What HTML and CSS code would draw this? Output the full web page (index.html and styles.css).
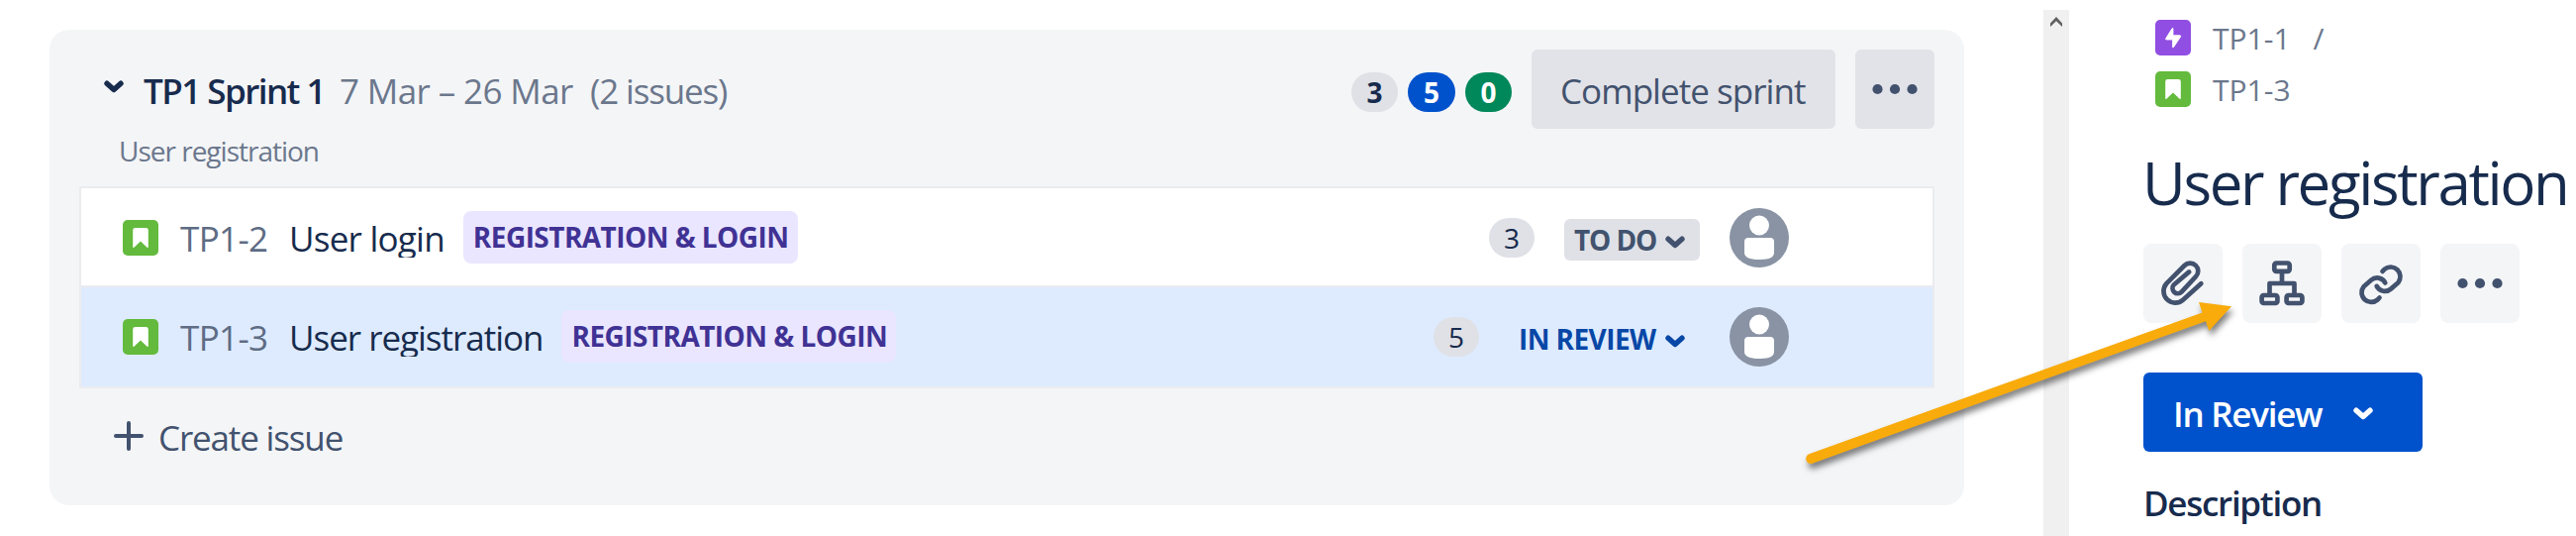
FILE: index.html
```html
<!DOCTYPE html>
<html lang="en">
<head>
<meta charset="utf-8">
<title>Backlog</title>
<link rel="stylesheet" href="styles.css">
</head>
<body>
<svg class="defs" aria-hidden="true">
  <symbol id="chevron" viewBox="0 0 20 13"><path d="M3 3.2 10 9.6 17 3.2" fill="none" stroke="currentColor" stroke-width="5.4" stroke-linecap="round" stroke-linejoin="round"/></symbol>
  <symbol id="story" viewBox="0 0 36 36"><rect width="36" height="36" rx="5" fill="#63ba3c"/><path d="M12.5 8h11a2.3 2.3 0 0 1 2.3 2.3V27q0 1.8-1.5.5L18 21.6l-6.300 5.900q-1.500 1.300-1.500-.5V10.300A2.300 2.300 0 0 1 12.500 8z" fill="#fff"/></symbol>
  <symbol id="dots" viewBox="0 0 80 80"><g fill="#42526e"><circle cx="22.500" cy="40" r="5.100"/><circle cx="40" cy="40" r="5.100"/><circle cx="57.500" cy="40" r="5.100"/></g></symbol>
  <symbol id="person" viewBox="0 0 60 60"><circle cx="30" cy="30" r="30" fill="#8993a4"/><circle cx="30" cy="17.500" r="10" fill="#fff"/><path d="M19 30h22a4 4 0 0 1 4 4v11q0 7-15 7t-15-7V34a4 4 0 0 1 4-4z" fill="#fff"/></symbol>
</svg>

<main class="backlog">
  <section class="sprint">
    <header class="sprint-head">
      <svg class="chevron sprint-toggle"><use href="#chevron"/></svg>
      <h2 class="sprint-name">TP1 Sprint 1</h2>
      <span class="sprint-dates">7 Mar – 26 Mar</span>
      <span class="sprint-count">(2 issues)</span>
      <div class="sprint-actions">
        <div class="totals">
          <span class="pill pill-bold">3</span>
          <span class="pill pill-bold pill-blue">5</span>
          <span class="pill pill-bold pill-green">0</span>
        </div>
        <button class="btn-complete">Complete sprint</button>
        <button class="btn-more"><svg class="square"><use href="#dots"/></svg></button>
      </div>
    </header>
    <p class="sprint-goal">User registration</p>

    <ul class="issues">
      <li class="issue">
        <svg class="type"><use href="#story"/></svg>
        <span class="key">TP1-2</span>
        <span class="summary">User login</span>
        <span class="epic">REGISTRATION &amp; LOGIN</span>
        <div class="meta">
          <span class="pill">3</span>
          <span class="status status-todo"><span>TO DO</span><svg class="chevron"><use href="#chevron"/></svg></span>
          <svg class="avatar"><use href="#person"/></svg>
        </div>
      </li>
      <li class="issue selected">
        <svg class="type"><use href="#story"/></svg>
        <span class="key">TP1-3</span>
        <span class="summary summary-long">User registration</span>
        <span class="epic">REGISTRATION &amp; LOGIN</span>
        <div class="meta">
          <span class="pill">5</span>
          <span class="status status-review"><span>IN REVIEW</span><svg class="chevron"><use href="#chevron"/></svg></span>
          <svg class="avatar"><use href="#person"/></svg>
        </div>
      </li>
    </ul>

    <div class="create">
      <svg class="plus" viewBox="0 0 30 30"><path d="M15 2v26M2 15h26" stroke="#42526e" stroke-width="4" stroke-linecap="round"/></svg>
      <span>Create issue</span>
    </div>
  </section>
</main>

<div class="scrollbar"><svg class="scroll-up" viewBox="0 0 14 10"><path d="M1 6.500 7 0l6 6.500V10L7 4.200 1 10z" fill="#606060"/></svg></div>

<aside class="detail">
  <nav class="crumbs">
    <div class="crumb">
      <svg class="type" viewBox="0 0 36 36"><rect width="36" height="36" rx="5" fill="#904ee2"/><path d="M17 8.700 10.700 18.800q-.7 1.200.7 1.200h6.100v7q0 1.700 1.200.4l6.900-10.300q.6-1.400-.8-1.400H18V9q-.2-1.300-1-.3z" fill="#fff" stroke="#fff" stroke-width=".8"/></svg>
      <span>TP1-1</span><span class="slash">/</span>
    </div>
    <div class="crumb">
      <svg class="type"><use href="#story"/></svg>
      <span>TP1-3</span>
    </div>
  </nav>
  <h1 class="title">User registration</h1>
  <div class="tools">
    <button class="tool"><svg class="square line" viewBox="0 0 80 80"><path d="M58.300 40.200 40 56.800A11.800 11.800 0 0 1 23.400 40.100L41.500 22A8 8 0 0 1 53 33.200L38.600 48.600A5.300 5.300 0 0 1 31 41.200L46.200 28.400"/></svg></button>
    <button class="tool"><svg class="square line" viewBox="0 0 80 80"><rect x="32.300" y="19.500" width="15.400" height="8.300" rx="2"/><path d="M40 28v11M27.500 50V40h25v10" stroke-linecap="butt"/><rect x="19.600" y="52" width="15.800" height="8" rx="2"/><rect x="44.600" y="52" width="15.800" height="8" rx="2"/></svg></button>
    <button class="tool"><svg class="square line" viewBox="0 0 80 80"><path id="half" d="M38.500 54.500 36.500 56.600A9.700 9.700 0 0 1 22.600 43.200L30 36.800A9.200 9.200 0 0 1 44.300 39.500"/><use href="#half" transform="rotate(180 40 41.200)"/></svg></button>
    <button class="tool"><svg class="square"><use href="#dots"/></svg></button>
  </div>
  <button class="btn-status"><span>In Review</span><svg class="chevron"><use href="#chevron"/></svg></button>
  <h3 class="section-title">Description</h3>
</aside>

<svg class="pointer" viewBox="0 0 450 180">
  <path d="M7.300 158.300 404.500 15.500 401 5 434 9.200 411.300 34 408 24.300 10.700 167.700A5 5 0 0 1 7.300 158.300z" fill="#f8ab0b"/>
</svg>
</body>
</html>
```
FILE: styles.css
```css
* { box-sizing: border-box; }
body {
  margin: 0;
  width: 2602px;
  height: 541px;
  display: flex;
  overflow: hidden;
  position: relative;
  background: #fff;
  color: #172b4d;
  font: 400 35px/40px "Open Sans", "Noto Sans", sans-serif;
  white-space: nowrap;
}
h1, h2, h3, p, ul { margin: 0; padding: 0; }
button { border: 0; padding: 0; margin: 0; font: inherit; color: inherit; text-align: left; }
svg { display: block; flex: none; }
.defs { position: absolute; width: 0; height: 0; }
.chevron { width: 20px; height: 13px; }
.square { width: 80px; height: 80px; }
.type { width: 36px; height: 36px; }

.backlog { flex: none; width: 2064px; padding: 30px 0 0 50px; }
.sprint {
  width: 1934px;
  height: 480px;
  padding: 20px 30px 0;
  border-radius: 20px;
  background: #f4f5f7;
}
.sprint-head { display: flex; align-items: center; height: 80px; }
.sprint-toggle { margin: 0 20px 6px 25px; }
.sprint-name { width: 198px; margin-top: 4px; font-size: 35px; font-weight: 600; letter-spacing: -1.55px; }
.sprint-dates { width: 253px; margin-top: 4px; color: #6b778c; letter-spacing: -.62px; }
.sprint-count { margin-top: 4px; color: #6b778c; letter-spacing: -1.15px; }
.sprint-actions { display: flex; align-items: center; gap: 20px; margin-left: auto; }
.totals { display: flex; gap: 10px; margin-top: 6px; }
.pill {
  width: 46px;
  height: 40px;
  border-radius: 20px;
  background: #dfe1e6;
  font-size: 28px;
  line-height: 41px;
  text-align: center;
}
.pill-bold { width: 47px; font-weight: 700; }
.pill-blue { width: 48px; background: #0052cc; color: #fff; }
.pill-green { background: #00875a; color: #fff; }
.btn-complete, .btn-more { height: 80px; border-radius: 6px; background: #e2e3e8; color: #42526e; }
.btn-complete { width: 307px; padding: 3px 0 0 29px; letter-spacing: -.95px; }
.btn-more { width: 80px; }
.sprint-goal { padding: 2px 0 0 40px; height: 58px; color: #6b778c; font-size: 28px; letter-spacing: -1px; }

.issues { list-style: none; border: 2px solid #ebecf0; border-bottom: 0; }
.issue {
  display: flex;
  align-items: center;
  height: 100px;
  padding: 2px 145px 0 42px;
  border-bottom: 2px solid #ebecf0;
  background: #fff;
}
.issue.selected { height: 102px; padding-top: 0; background: #deebff; }
.issue .key, .issue .type { flex: none; }
.key { width: 110px; margin-left: 22px; height: 40px; line-height: 42px; color: #5e6c84; letter-spacing: -.65px; }
.summary { height: 40px; overflow: hidden; line-height: 42px; letter-spacing: -.76px; }
.summary-long { letter-spacing: -1.02px; }
.epic {
  width: 338px;
  height: 53px;
  margin: 0 0 1px 19px;
  padding-left: 10px;
  border-radius: 8px;
  background: #eae6ff;
  color: #403294;
  font-size: 28px;
  font-weight: 700;
  line-height: 53px;
  letter-spacing: -.55px;
}
.meta { display: flex; align-items: center; gap: 30px; margin-left: auto; }
.status {
  display: flex;
  align-items: center;
  justify-content: space-between;
  height: 42px;
  margin-top: 4px;
  padding: 0 15px 0 10px;
  border-radius: 6px;
  font-size: 28px;
  font-weight: 700;
}
.status .chevron { margin-top: 5px; }
.status-todo { width: 137px; background: #dfe1e6; color: #42526e; letter-spacing: -1.1px; }
.status-review { width: 193px; color: #0747a6; letter-spacing: -.58px; }
.avatar { width: 60px; height: 60px; }

.create { display: flex; align-items: center; gap: 15px; height: 96px; padding-left: 35px; color: #42526e; letter-spacing: -1.15px; }
.create span { margin-top: 4px; }
.plus { width: 30px; height: 30px; }

.scrollbar { flex: none; width: 26px; height: 531px; margin-top: 10px; padding: 7px 0 0 6px; background: #f0f0f0; }
.scroll-up { width: 14px; height: 10px; }

.detail { flex: none; width: 512px; padding: 12px 0 0 75px; }
.crumb { display: flex; align-items: center; height: 52px; padding-left: 12px; gap: 22px; color: #6b778c; font-size: 30px; }
.crumb span { margin-top: 2px; }
.crumb .slash { margin-left: 1px; }
.title { margin: 28px 0 22px -1px; font-size: 60px; font-weight: 400; line-height: 80px; letter-spacing: -2.34px; }
.tools { display: flex; gap: 20px; }
.tool { width: 80px; height: 80px; border-radius: 8px; background: #f4f5f7; }
.line { fill: none; stroke: #42526e; stroke-width: 4.700px; stroke-linecap: round; stroke-linejoin: round; }
.btn-status {
  display: flex;
  align-items: center;
  justify-content: space-between;
  width: 282px;
  height: 80px;
  margin: 50px 0 32px;
  padding: 3px 50px 0 30px;
  border-radius: 6px;
  background: #0052cc;
  color: #fff;
  font-weight: 600;
  letter-spacing: -1.26px;
}
.section-title { font-size: 35px; font-weight: 600; letter-spacing: -1.29px; }

.pointer {
  position: absolute;
  left: 1820px;
  top: 300px;
  width: 450px;
  height: 180px;
  filter: drop-shadow(2px 5px 3px rgba(0, 0, 0, .5));
}
```
